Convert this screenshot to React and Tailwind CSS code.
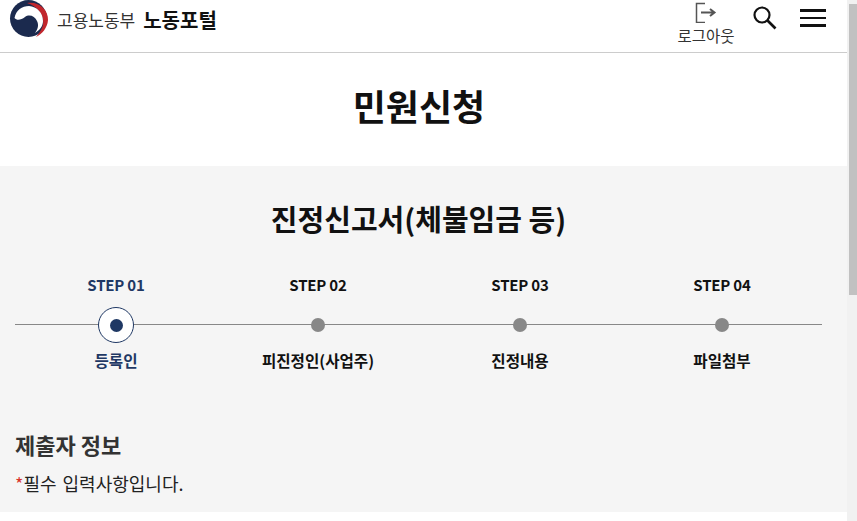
const FONT = "font-['Noto_Sans_CJK_KR','Noto_Sans',sans-serif]";

const steps = [
  { no: "STEP 01", label: "등록인", active: true },
  { no: "STEP 02", label: "피진정인(사업주)" },
  { no: "STEP 03", label: "진정내용" },
  { no: "STEP 04", label: "파일첨부" },
];

function Logo() {
  return (
    <svg width="40" height="38" viewBox="0 0 40 38" className="shrink-0">
      <circle cx="19.5" cy="18.5" r="18.5" fill="#1b2a4e" />
      <path d="M18 3C30 1 39.5 10 39 20c-.5 8-6 14-12 17 5-6 8-11 7-17C33 12 26 5.500 18 3z" fill="#c1272d" />
      <path d="M5.500 18C7 10 13 6 20 6c8 .5 14 7 14 15 0 5-3 9-8 12 3-4 4-8 2-12-2-5-8-7-12-4-4 3-8 4-10.500 1z" fill="#fff" />
    </svg>
  );
}

function Step({ no, label, active }) {
  return (
    <li className="w-[202px] shrink-0 flex flex-col items-center">
      <span className={`text-[15px] leading-[22px] font-semibold tracking-[-0.2px] ${active ? "text-[#1f3864]" : "text-[#111]"}`}>{no}</span>
      <span className="h-[36px] mt-[11px] flex items-center justify-center">
        {active ? (
          <span className="w-[36px] h-[36px] rounded-full border border-[#1f3864] bg-white flex items-center justify-center">
            <span className="w-[13px] h-[13px] rounded-full bg-[#1f3864]" />
          </span>
        ) : (
          <span className="w-[14px] h-[14px] rounded-full bg-[#888]" />
        )}
      </span>
      <span className={`mt-[6px] text-[15.6px] leading-[22px] font-bold ${active ? "text-[#1f3864]" : "text-[#111]"}`}>{label}</span>
    </li>
  );
}

export default function App() {
  return (
    <div className={`h-[521px] overflow-hidden flex bg-white ${FONT}`}>
      <div className="w-[847px] shrink-0">
        {/* header */}
        <header className="h-[53px] border-b border-[#ccc] flex items-start pl-[9px] pr-[21px]">
          <Logo />
          <span className="ml-[8px] mt-[7px] text-[17px] leading-[26px] text-[#333]">고용노동부</span>
          <span className="ml-[8px] mt-[6px] text-[20px] leading-[28px] font-bold text-[#111]">노동포털</span>
          <div className="ml-auto flex items-start">
            <button className="flex flex-col items-center w-[60px] text-[#333]">
              <svg width="22" height="21" viewBox="0 0 22 21" fill="none" stroke="#555" strokeWidth="1.5" className="mt-[2px]">
                <path d="M10 1.500H1.500v19H10" />
                <path d="M6 10.500h13M15 7l4.500 3.500L15 14" strokeWidth="2" />
              </svg>
              <span className="mt-[1px] text-[15.500px] leading-[22px]">로그아웃</span>
            </button>
            <svg width="26" height="26" viewBox="0 0 26 26" fill="none" stroke="#111" strokeWidth="2.200" className="ml-[16px] mt-[5px]">
              <circle cx="10" cy="10" r="7.500" />
              <path d="M15.500 15.500l8 8" strokeWidth="2.600" />
            </svg>
            <div className="ml-[22px] mt-[9px] w-[26px] flex flex-col gap-[5px]">
              <span className="h-[2.500px] bg-[#111]" />
              <span className="h-[2.500px] bg-[#111]" />
              <span className="h-[2.500px] bg-[#111]" />
            </div>
          </div>
        </header>

        <h1 className="h-[113px] pb-[10px] pr-[9px] flex items-center justify-center text-[36px] font-bold text-[#111]">민원신청</h1>

        <main className="h-[346px] bg-[#f5f5f5] pl-[15px] pr-[25px]">
          <h2 className="pt-[31px] text-center text-[29px] leading-[42px] font-bold text-[#111]">진정신고서(체불임금 등)</h2>
          <div className="relative mt-[35px]">
            <div className="absolute left-0 right-0 top-[50px] h-px bg-[#888]" />
            <ol className="relative flex">
              {steps.map((s) => (
                <Step key={s.no} {...s} />
              ))}
            </ol>
          </div>
          <h3 className="mt-[58px] text-[22px] leading-[30px] font-bold text-[#333]">제출자 정보</h3>
          <p className="mt-[11px] text-[18px] leading-[26px] text-[#222] [word-spacing:2px]">
            <span className="text-[#d9342b]">*</span>필수 입력사항입니다.
          </p>
        </main>
      </div>
      <div className="w-[10px] bg-[#f1f1f1] pl-[2px] pt-[4px]">
        <div className="h-[291px] bg-[#c1c1c1]" />
      </div>
    </div>
  );
}
